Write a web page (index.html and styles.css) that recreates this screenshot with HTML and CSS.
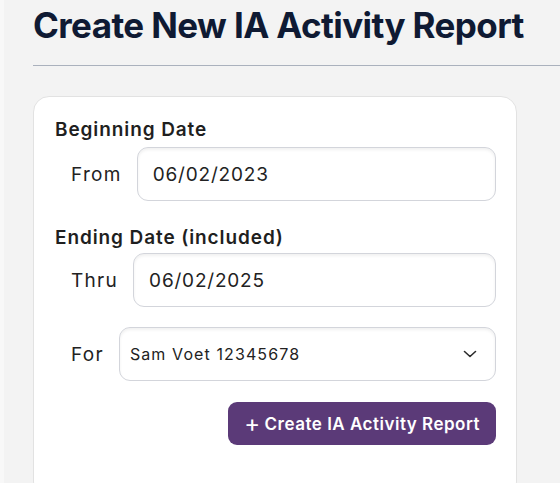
FILE: index.html
```html
<!DOCTYPE html>
<html>
<head>
<meta charset="utf-8">
<link rel="stylesheet" href="styles.css">
</head>
<body>
<div class="page">
  <main class="main">
    <h1 class="title">Create New IA Activity Report</h1>
    <hr class="rule">
    <section class="card">
      <div class="group">
        <div class="group-title">Beginning Date</div>
        <div class="row">
          <label class="label">From</label>
          <div class="field"><span class="value">06/02/2023</span></div>
        </div>
      </div>
      <div class="group">
        <div class="group-title">Ending Date (included)</div>
        <div class="row">
          <label class="label">Thru</label>
          <div class="field"><span class="value">06/02/2025</span></div>
        </div>
      </div>
      <div class="row row-select">
        <label class="label">For</label>
        <div class="field select">
          <span class="value small">Sam Voet 12345678</span>
          <svg class="chev" width="14" height="8" viewBox="0 0 14 8"><polyline points="1.5,1.5 7,6.5 12.5,1.5" fill="none" stroke="#2b2b2b" stroke-width="1.6" stroke-linecap="round" stroke-linejoin="round"/></svg>
        </div>
      </div>
      <div class="actions">
        <button class="btn"><span class="plus">+</span>Create IA Activity Report</button>
      </div>
    </section>
  </main>
</div>
</body>
</html>
```
FILE: styles.css
```css
html, body {
  margin: 0;
  padding: 0;
  height: 100%;
}
body {
  background: #f3f3f3;
  font-family: Inter, "Noto Sans", "DejaVu Sans", sans-serif;
  color: #222;
  overflow: hidden;
}
.page {
  display: flex;
  min-height: 100%;
  border-left: 4px solid #f8f8f8;
}
.main {
  flex: 1;
  padding: 0 0 0 29px;
}
.title {
  margin: 0;
  padding-top: 4px;
  font-size: 35px;
  line-height: 42px;
  font-weight: 700;
  color: #0f1a33;
  white-space: nowrap;
  letter-spacing: -0.6px;
}
.rule {
  margin: 19px 0 0 0;
  border: 0;
  border-top: 1px solid #aab1bd;
}
.card {
  margin-top: 30px;
  width: 441px;
  background: #fff;
  border: 1px solid #e2e2e2;
  border-radius: 16px;
  padding: 20px 20px 52px 21px;
  box-sizing: content-box;
}
.group-title {
  font-size: 19px;
  font-weight: 600;
  color: #1f1f1f;
  line-height: 26px;
  letter-spacing: 0.9px;
}
.group + .group {
  margin-top: 24px;
}
.group-title + .row {
  margin-top: 4px;
}
.group + .group .group-title + .row {
  margin-top: 2px;
}
.row {
  display: flex;
  align-items: center;
  gap: 15px;
  padding-left: 16px;
}
.label {
  font-size: 19px;
  color: #222;
  letter-spacing: 1.3px;
}
.field {
  flex: 1;
  height: 52px;
  border: 1px solid #d3d5db;
  border-radius: 11px;
  box-shadow: inset 0 2px 3px rgba(0, 0, 0, 0.06);
  display: flex;
  align-items: center;
  padding: 0 15px;
}
.value {
  font-size: 19px;
  color: #222;
  letter-spacing: 0.8px;
}
.value.small {
  font-size: 16px;
  letter-spacing: 1.1px;
}
.select {
  justify-content: space-between;
  padding: 0 18px 0 10px;
}
.row-select {
  margin-top: 20px;
}
.actions {
  display: flex;
  justify-content: flex-end;
  margin-top: 21px;
}
.btn {
  background: #5b3a78;
  color: #fff;
  border: 0;
  border-radius: 9px;
  height: 43px;
  padding: 0 16px;
  font-family: inherit;
  font-size: 17px;
  font-weight: 600;
  letter-spacing: 0.5px;
  display: flex;
  align-items: center;
}
.plus {
  font-size: 24px;
  font-weight: 400;
  margin-right: 4px;
  line-height: 1;
}
```
